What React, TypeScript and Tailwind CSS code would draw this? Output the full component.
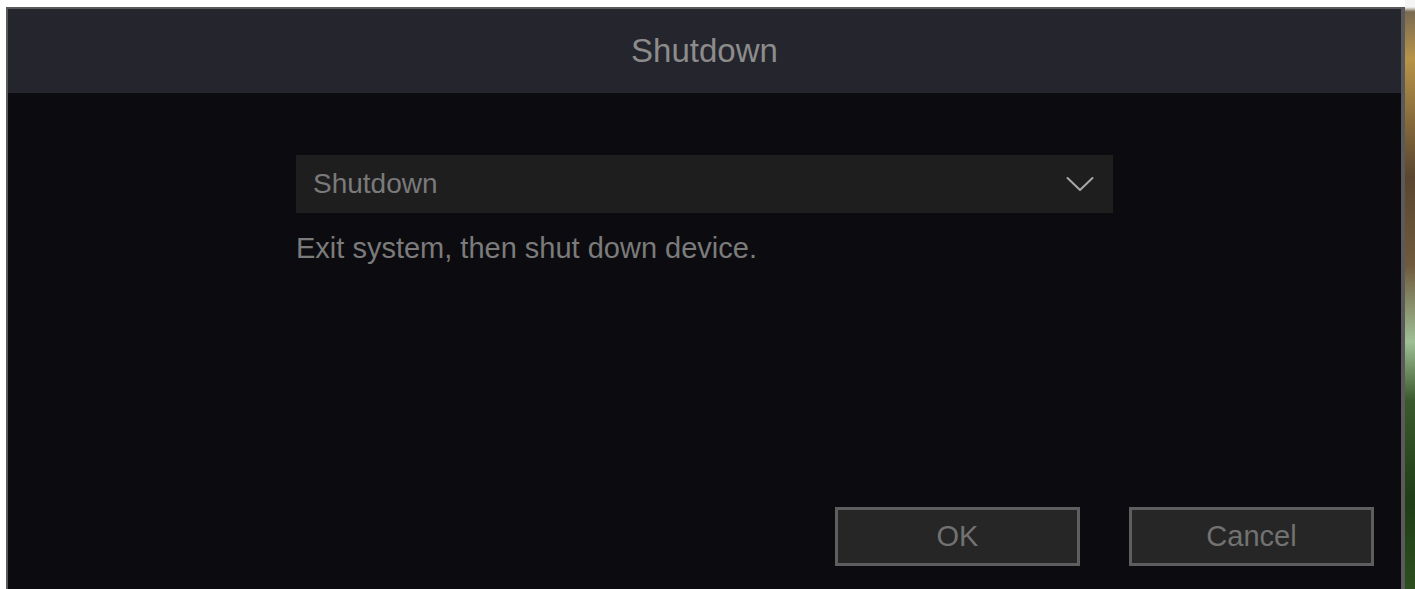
import { useState } from 'react'

function Chevron() {
  return (
    <svg width="28" height="16" viewBox="0 0 28 16" fill="none" aria-hidden>
      <path d="M1.5 2 L14 14 L26.5 2" stroke="#a8a8a8" strokeWidth="2" strokeLinecap="round" strokeLinejoin="round" />
    </svg>
  )
}

function DialogButton({ label }: { label: string }) {
  return (
    <button className="flex h-[59px] w-[245px] items-center justify-center border-[3px] border-[#5e5e5e] bg-[#262626] text-[29px] text-[#727272]">
      {label}
    </button>
  )
}

export default function App() {
  const [mode] = useState('Shutdown')

  return (
    <div className="flex h-[589px] w-[1415px] overflow-hidden bg-white font-['Liberation_Sans',Arial,sans-serif]">
      <div className="w-[6px] shrink-0" />
      <div className="mt-[7px] flex flex-1 flex-col border-l-2 border-t-2 border-r-4 border-[#5a5a5c] bg-[#0c0c10]">
        <header className="flex h-[84px] shrink-0 items-center justify-center bg-[#25252d] text-[33px] text-[#8c8c8c]">
          Shutdown
        </header>

        <div className="flex flex-1 flex-col px-[288px] pt-[62px]">
          <div className="flex h-[58px] items-center justify-between bg-[#1e1e1f] pl-[17px] pr-[19px]">
            <span className="text-[28px] text-[#7a7a7a]">{mode}</span>
            <Chevron />
          </div>
          <p className="mt-[14px] text-[29px] text-[#7b7b7b]">Exit system, then shut down device.</p>
        </div>

        <div className="flex justify-end gap-[49px] pb-[23px] pr-[27px]">
          <DialogButton label="OK" />
          <DialogButton label="Cancel" />
        </div>
      </div>
      {/* live video peeking out beside the dialog */}
      <div className="w-[10px] shrink-0 bg-[linear-gradient(180deg,#f4f4f4_0%,#f4f4f4_1.2%,#7a6a52_2%,#b89448_10%,#5a4630_30%,#6f5a3c_45%,#9fbf95_58%,#3b5a2c_68%,#1f3d17_85%,#2d4f1f_100%)]" />
    </div>
  )
}
